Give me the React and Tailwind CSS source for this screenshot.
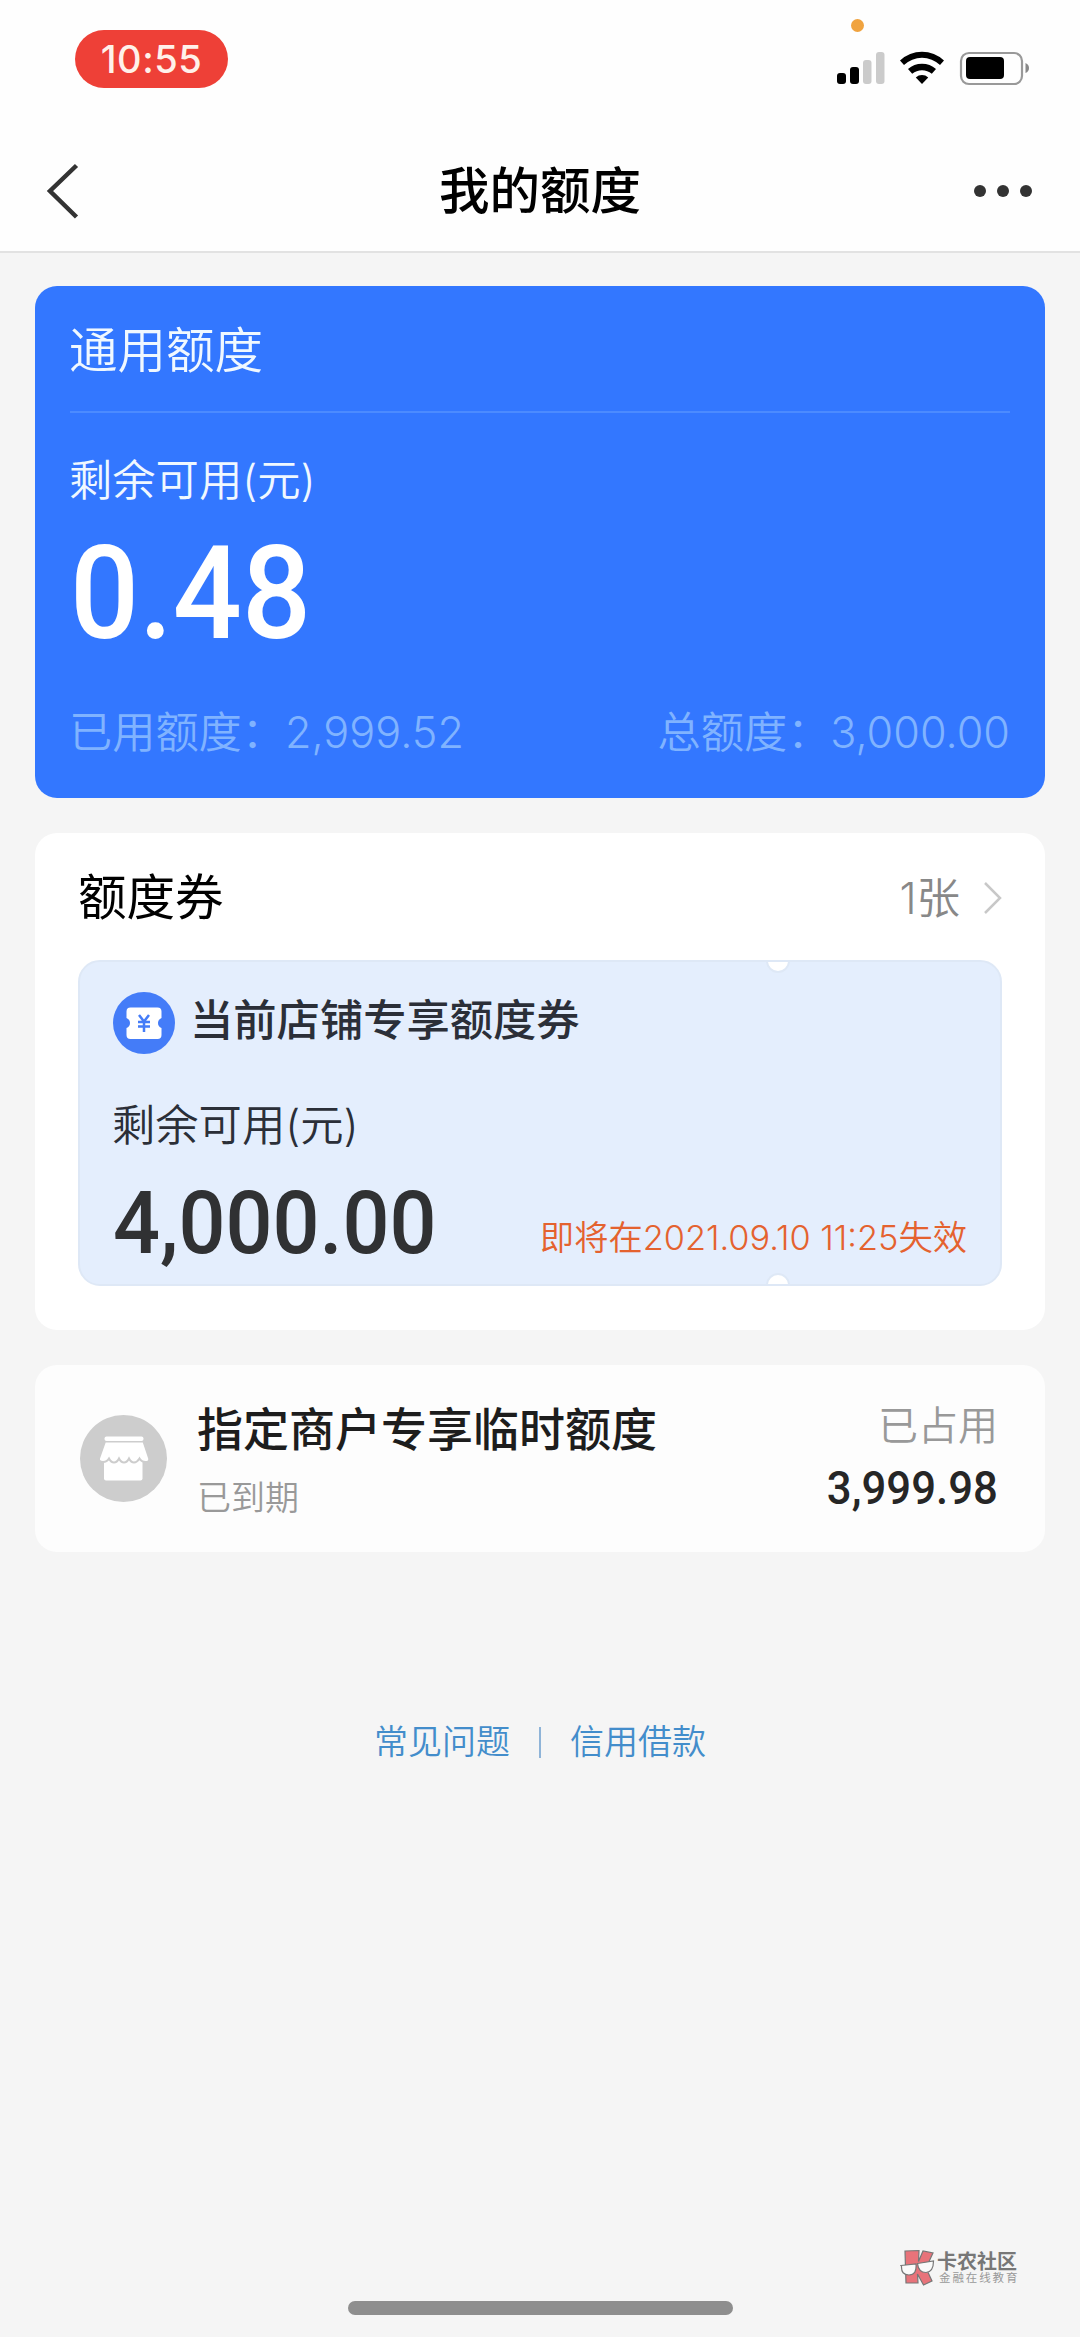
const cjk = "font-['Inter','Noto_Sans_CJK_SC',sans-serif]";

function Line({ children, className = "" }) {
  return <div className={`whitespace-nowrap leading-none ${className}`}>{children}</div>;
}

function StatusBar() {
  return (
    <div className="relative flex h-[130px] items-start justify-between pl-[75px] pr-[50px]">
      <div className="mt-[30px] flex h-[58px] w-[153px] items-center justify-center rounded-full bg-[#ee4037] text-[38px] font-medium tracking-[0.5px] text-[#fff1ea]">
        10:55
      </div>
      <div className="absolute left-[851px] top-[19px] h-[13px] w-[13px] rounded-full bg-[#f0a33f]" />
      <svg className="mt-[48px]" width="194" height="40" viewBox="836 48 194 40">
        <rect x="837" y="73" width="9" height="11" rx="3" />
        <rect x="850" y="67" width="9" height="17" rx="3" />
        <rect x="863" y="60" width="8.500" height="24" rx="3" fill="#cbcbcb" />
        <rect x="876" y="52" width="8.500" height="32" rx="3" fill="#cbcbcb" />
        <path d="M900 60.500a32 32 0 0 1 44 0l-4 4.500a26 26 0 0 0-36 0z" />
        <path d="M908 69a21 21 0 0 1 28 0l-4.200 4.800a15 15 0 0 0-19.600 0z" />
        <path d="M922 84l-6.200-6.600a9.500 9.500 0 0 1 12.400 0z" />
        <rect x="961" y="53" width="61" height="31" rx="8" fill="none" stroke="#999" strokeWidth="2.200" />
        <rect x="966" y="57" width="38" height="22" rx="4" />
        <path d="M1025.500 63q3.500 1.500 3.500 5t-3.500 5z" fill="#888" />
      </svg>
    </div>
  );
}

function NavBar() {
  return (
    <div className="flex h-[123px] items-center justify-between border-b-2 border-[#e2e2e2] pl-[46px] pr-[48px]">
      <svg width="61" height="56" viewBox="46 163 61 56" fill="none" stroke="#333" strokeWidth="4.500">
        <path d="M76.500 165.500L50 191l26.500 26" />
      </svg>
      <Line className="mt-[2px] text-[50.5px] font-medium text-black">我的额度</Line>
      <div className="flex w-[59px] justify-between pl-[1px]">
        <i className="h-3 w-3 rounded-full bg-[#333]" />
        <i className="h-3 w-3 rounded-full bg-[#333]" />
        <i className="h-3 w-3 rounded-full bg-[#333]" />
      </div>
    </div>
  );
}

function GeneralCard() {
  return (
    <section className="mt-[33px] flex h-[512px] flex-col rounded-[22px] bg-[#3377ff] px-[35px] pb-[44px] pt-[41px] text-[#f0f8ff]">
      <Line className="-ml-[1px] text-[48.5px] font-[350]">通用额度</Line>
      <div className="mt-[35px] h-[2px] bg-[#4c8bff]" />
      <Line className="-ml-[1px] mt-[46px] text-[43.3px] font-[350]">剩余可用(元)</Line>
      <Line className="mt-[27px] origin-left scale-x-[0.935] font-['Roboto'] text-[130px] font-medium text-white">0.48</Line>
      <div className="-ml-[1px] mt-auto flex justify-between text-[43.2px] font-[350] text-[#80b3ff]">
        <Line>已用额度：2,999.52</Line>
        <Line>总额度：3,000.00</Line>
      </div>
    </section>
  );
}

function CouponIcon() {
  return (
    <svg width="62" height="62" viewBox="0 0 62 62">
      <circle cx="31" cy="31" r="31" fill="#447cf8" />
      <path fill="#fff" d="M17.500 15.500h27q4 0 4 4v6.500q-3.500 1.500-3.500 5t3.500 5v7q0 4-4 4h-27q-4 0-4-4v-7q3.500-1.500 3.500-5t-3.500-5v-6.500q0-4 4-4z" />
      <path d="M26 23l5 6.500 5-6.500M25 30h12M25 34.500h12M31 29v11" fill="none" stroke="#447cf8" strokeWidth="2.500" />
    </svg>
  );
}

function CouponCard() {
  return (
    <section className="mt-[35px] h-[497px] rounded-[22px] bg-white px-[43px] pt-[41px]">
      <div className="flex items-center justify-between">
        <Line className="text-[48.5px] text-black">额度券</Line>
        <div className="flex items-center gap-[23px]">
          <Line className="text-[43.5px] font-[350] text-[#888]">1张</Line>
          <svg width="19" height="32" viewBox="0 0 19 32" fill="none" stroke="#c8c8c8" strokeWidth="2.500">
            <path d="M2 1l15 15L2 31" />
          </svg>
        </div>
      </div>
      <div className="relative mt-[37px] h-[326px] overflow-hidden rounded-[22px] border-2 border-[#dee8f6] bg-[#e4eefd] px-[33px] pt-[30px]">
        <i className="absolute left-[686px] top-[-13px] h-[24px] w-[24px] rounded-full border-2 border-[#dee8f6] bg-white" />
        <i className="absolute bottom-[-13px] left-[686px] h-[24px] w-[24px] rounded-full border-2 border-[#dee8f6] bg-white" />
        <div className="flex items-center gap-[15px]">
          <CouponIcon />
          <Line className="-mt-[3px] text-[43.3px] font-medium text-[#2b2f38]">当前店铺专享额度券</Line>
        </div>
        <Line className="-ml-[1px] mt-[50px] text-[43.3px] font-[350] text-[#2b2f38]">剩余可用(元)</Line>
        <div className="mt-[32px] flex items-end justify-between">
          <Line className="w-[340px] origin-left scale-x-[0.94] font-['Roboto'] text-[88px] font-medium text-[#303133]">4,000.00</Line>
          <Line className="mb-[12px] text-[34.3px] font-[350] text-[#e4622f]">即将在2021.09.10 11:25失效</Line>
        </div>
      </div>
    </section>
  );
}

function StoreIcon() {
  return (
    <svg width="87" height="87" viewBox="0 0 87 87">
      <circle cx="43.500" cy="43.500" r="43.500" fill="#cdcdcd" />
      <rect x="24" y="40" width="38.500" height="25.500" rx="2" fill="#fff" />
      <path
        fill="#fff"
        stroke="#cdcdcd"
        strokeWidth="2"
        d="M25 26.500h38.500l5.700 17q.5 3.500-3.700 3.500-4 0-6-3.500-2.500 4-5.500 4t-5-4q-2 4-5 4t-5-4q-2 4-5 4t-5-4q-2 3.500-6 3.500-4.500 0-4-3.500z"
      />
      <rect x="24.500" y="21.500" width="39" height="4.500" rx="2" fill="#fff" />
    </svg>
  );
}

function MerchantCard() {
  return (
    <section className="mt-[35px] flex h-[187px] rounded-[22px] bg-[#fdfdfd] pl-[45px] pr-[47px]">
      <div className="mt-[50px]"><StoreIcon /></div>
      <div className="ml-[30px] mt-[41px] flex-1">
        <Line className="text-[46px] font-medium text-[#1d1d1d]">指定商户专享临时额度</Line>
        <Line className="mt-[29px] text-[34px] font-[350] text-[#999]">已到期</Line>
      </div>
      <div className="mt-[41px] flex flex-col items-end">
        <Line className="text-[40px] font-[350] text-[#999]">已占用</Line>
        <Line className="mt-[18px] origin-right scale-x-[0.93] font-['Roboto'] text-[47px] font-medium text-[#262626]">3,999.98</Line>
      </div>
    </section>
  );
}

function Watermark() {
  return (
    <div className="absolute left-[900px] top-[2249px] flex items-start">
      <svg width="36" height="38" viewBox="0 0 36 38" stroke="#777" strokeWidth="1.200">
        <path d="M5 2l14-.5-.5 11 4.500-10.500 10 2-7 15 6 13-8.500 4-6-11 .5 9H6z" fill="#e8737a" />
        <path d="M1 16.500l15-1.500q1 11-7 11T1.500 17zM17.500 14.500L33.500 12q0 11-7.500 11.500-7.500 0-8.500-9z" fill="#fafafa" />
      </svg>
      <div className="ml-[1px] mt-[3px]">
        <Line className="text-[20px] font-bold text-[#777]">卡农社区</Line>
        <Line className="ml-[2px] mt-[1px] text-[11.5px] tracking-[1.9px] text-[#999]">金融在线教育</Line>
      </div>
    </div>
  );
}

export default function App() {
  return (
    <main className={`relative h-[2337px] w-[1080px] overflow-hidden bg-[#f5f5f5] ${cjk}`}>
      <header className="bg-[#fefefe]">
        <StatusBar />
        <NavBar />
      </header>
      <div className="mx-[35px]">
        <GeneralCard />
        <CouponCard />
        <MerchantCard />
      </div>
      <footer className="mt-[173px] flex items-center justify-center text-[34px] text-[#438dcb]">
        <Line className="font-[350]">常见问题</Line>
        <i className="mx-[29px] h-[31px] w-[2px] bg-[#8fb4d8]" />
        <Line className="font-[350]">信用借款</Line>
      </footer>
      <Watermark />
      <div className="absolute left-[348px] top-[2301px] h-[14px] w-[385px] rounded-full bg-[#8e8e8e]" />
    </main>
  );
}
